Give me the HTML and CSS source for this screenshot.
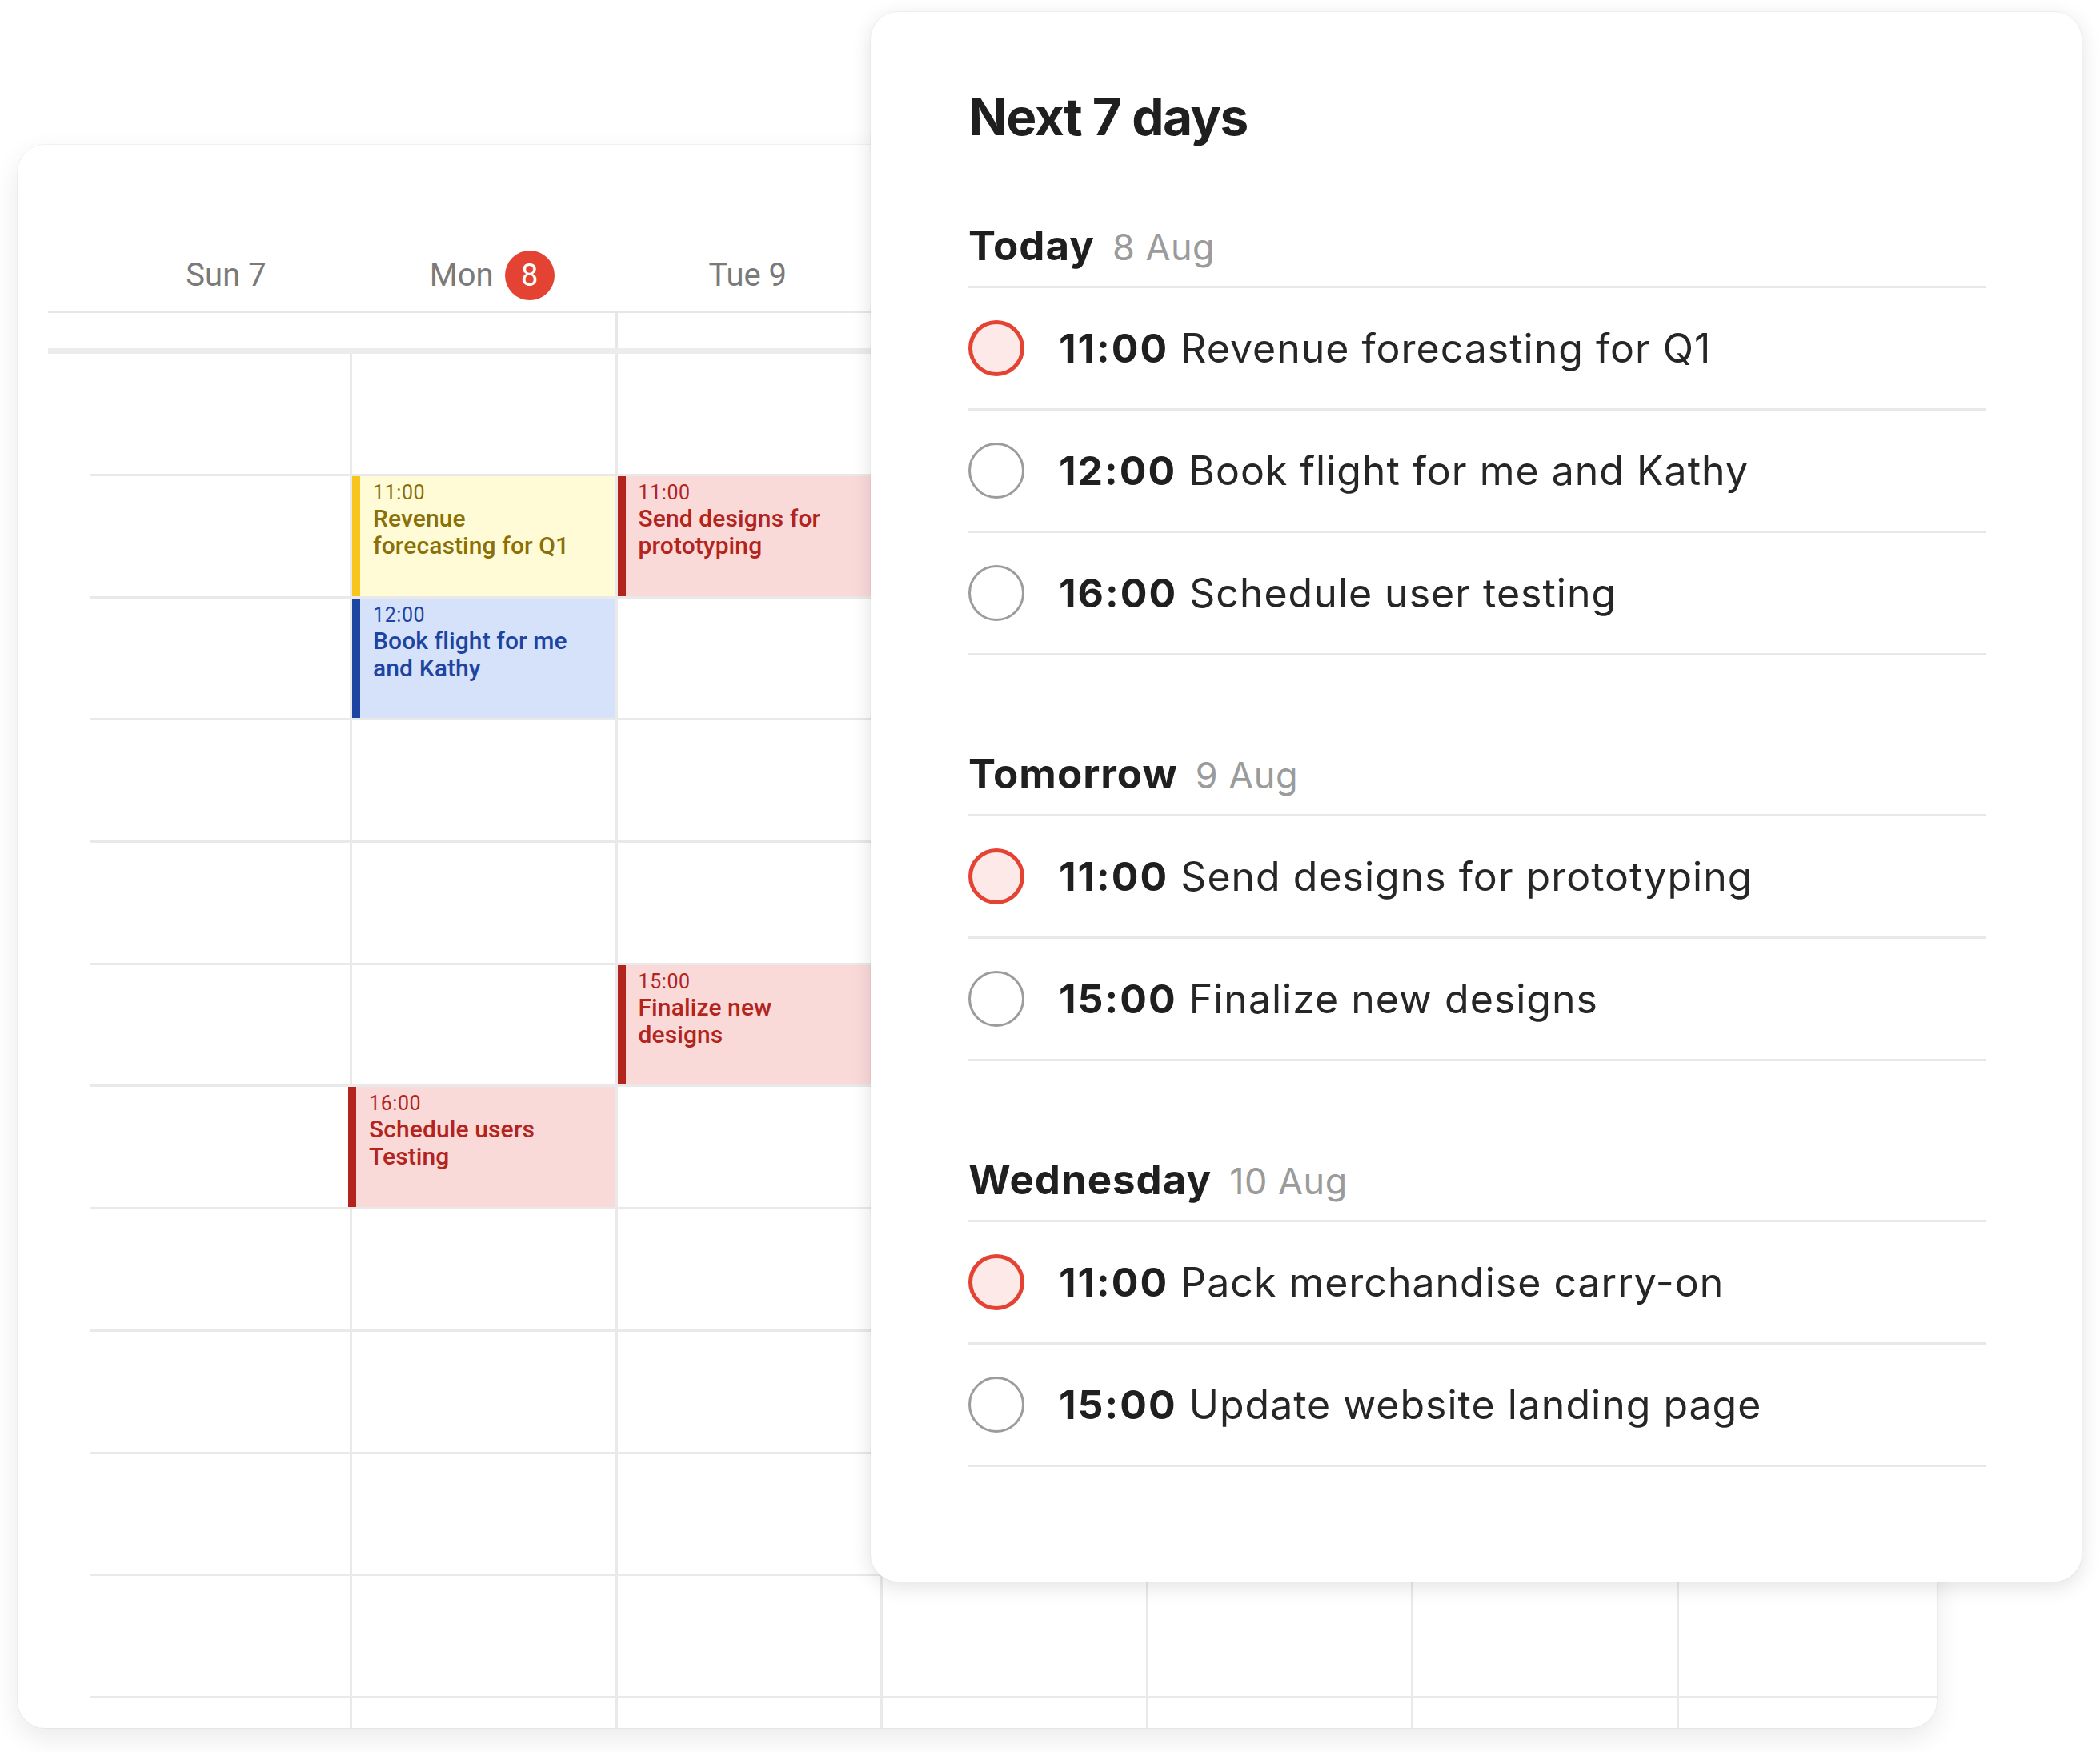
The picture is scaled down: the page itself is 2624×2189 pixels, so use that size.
FILE: index.html
```html
<!DOCTYPE html>
<html lang="en">
<head>
<meta charset="utf-8">
<title>Next 7 days</title>
<link rel="stylesheet" href="styles.css">
</head>
<body>
<div class="stage">
  <section class="calendar">
    <div class="cal-head">
      <div class="day-labels">
        <div class="day sun">Sun 7</div>
        <div class="day mon">Mon <span class="badge">8</span></div>
        <div class="day">Tue 9</div>
        <div class="day"></div>
        <div class="day"></div>
        <div class="day"></div>
        <div class="day"></div>
      </div>
    </div>
    <div class="allday">
      <div class="allday-grid">
        <div class="ad-cell"></div><div class="ad-cell"></div><div class="ad-cell"></div><div class="ad-cell"></div><div class="ad-cell"></div><div class="ad-cell"></div><div class="ad-cell"></div>
      </div>
    </div>
    <div class="cal-body">
      <div class="hour-row first">
        <div class="cell"></div><div class="cell"></div><div class="cell"></div><div class="cell"></div><div class="cell"></div><div class="cell"></div><div class="cell"></div>
      </div>
      <div class="hour-row">
        <div class="cell"></div>
        <div class="cell"><div class="event yellow"><div class="ev-time">11:00</div><div class="ev-title">Revenue forecasting for Q1</div></div></div>
        <div class="cell"><div class="event red"><div class="ev-time">11:00</div><div class="ev-title">Send designs for prototyping</div></div></div>
        <div class="cell"></div><div class="cell"></div><div class="cell"></div><div class="cell"></div>
      </div>
      <div class="hour-row">
        <div class="cell"></div>
        <div class="cell"><div class="event blue"><div class="ev-time">12:00</div><div class="ev-title">Book flight for me and Kathy</div></div></div>
        <div class="cell"></div><div class="cell"></div><div class="cell"></div><div class="cell"></div><div class="cell"></div>
      </div>
      <div class="hour-row">
        <div class="cell"></div><div class="cell"></div><div class="cell"></div><div class="cell"></div><div class="cell"></div><div class="cell"></div><div class="cell"></div>
      </div>
      <div class="hour-row">
        <div class="cell"></div><div class="cell"></div><div class="cell"></div><div class="cell"></div><div class="cell"></div><div class="cell"></div><div class="cell"></div>
      </div>
      <div class="hour-row">
        <div class="cell"></div><div class="cell"></div>
        <div class="cell"><div class="event red"><div class="ev-time">15:00</div><div class="ev-title">Finalize new designs</div></div></div>
        <div class="cell"></div><div class="cell"></div><div class="cell"></div><div class="cell"></div>
      </div>
      <div class="hour-row">
        <div class="cell"></div>
        <div class="cell"><div class="event red wide"><div class="ev-time">16:00</div><div class="ev-title">Schedule users Testing</div></div></div>
        <div class="cell"></div><div class="cell"></div><div class="cell"></div><div class="cell"></div><div class="cell"></div>
      </div>
      <div class="hour-row">
        <div class="cell"></div><div class="cell"></div><div class="cell"></div><div class="cell"></div><div class="cell"></div><div class="cell"></div><div class="cell"></div>
      </div>
      <div class="hour-row">
        <div class="cell"></div><div class="cell"></div><div class="cell"></div><div class="cell"></div><div class="cell"></div><div class="cell"></div><div class="cell"></div>
      </div>
      <div class="hour-row">
        <div class="cell"></div><div class="cell"></div><div class="cell"></div><div class="cell"></div><div class="cell"></div><div class="cell"></div><div class="cell"></div>
      </div>
      <div class="hour-row">
        <div class="cell"></div><div class="cell"></div><div class="cell"></div><div class="cell"></div><div class="cell"></div><div class="cell"></div><div class="cell"></div>
      </div>
      <div class="hour-row last">
        <div class="cell"></div><div class="cell"></div><div class="cell"></div><div class="cell"></div><div class="cell"></div><div class="cell"></div><div class="cell"></div>
      </div>
    </div>
  </section>

  <aside class="panel">
    <h1 class="panel-title">Next 7 days</h1>

    <section class="group">
      <h2 class="group-head"><span class="group-name">Today</span><span class="group-date">8 Aug</span></h2>
      <ul class="tasks">
        <li class="task"><span class="check urgent"></span><span class="task-text"><b>11:00</b> Revenue forecasting for Q1</span></li>
        <li class="task"><span class="check"></span><span class="task-text"><b>12:00</b> Book flight for me and Kathy</span></li>
        <li class="task"><span class="check"></span><span class="task-text"><b>16:00</b> Schedule user testing</span></li>
      </ul>
    </section>

    <section class="group">
      <h2 class="group-head"><span class="group-name">Tomorrow</span><span class="group-date">9 Aug</span></h2>
      <ul class="tasks">
        <li class="task"><span class="check urgent"></span><span class="task-text"><b>11:00</b> Send designs for prototyping</span></li>
        <li class="task"><span class="check"></span><span class="task-text"><b>15:00</b> Finalize new designs</span></li>
      </ul>
    </section>

    <section class="group">
      <h2 class="group-head"><span class="group-name">Wednesday</span><span class="group-date">10 Aug</span></h2>
      <ul class="tasks">
        <li class="task"><span class="check urgent"></span><span class="task-text"><b>11:00</b> Pack merchandise carry-on</span></li>
        <li class="task"><span class="check"></span><span class="task-text"><b>15:00</b> Update website landing page</span></li>
      </ul>
    </section>
  </aside>
</div>
</body>
</html>
```

FILE: styles.css
```css
* {
  box-sizing: border-box;
  margin: 0;
  padding: 0;
}

html, body {
  background: #ffffff;
}

body {
  width: 2624px;
  height: 2189px;
  overflow: hidden;
  font-family: Roboto, "Liberation Sans", sans-serif;
}

.stage {
  position: relative;
  width: 2624px;
  height: 2189px;
  padding: 181px 0 0 22px;
}

/* ---------- Calendar card ---------- */
.calendar {
  width: 2398px;
  height: 1978px;
  background: #ffffff;
  border-radius: 34px;
  overflow: hidden;
  box-shadow: 0 0 0 1px rgba(0, 0, 0, 0.035), 0 12px 34px rgba(0, 0, 0, 0.09);
}

.cal-head {
  margin-left: 38px;
  padding: 131px 0 13px 52px;
  border-bottom: 3px solid #e7e7e7;
}

.day-labels,
.allday-grid,
.hour-row {
  display: grid;
  grid-template-columns: 325px repeat(6, 331.5px);
}

.day {
  display: flex;
  align-items: center;
  justify-content: center;
  gap: 14px;
  height: 63px;
  font-size: 40px;
  line-height: 63px;
  color: #7a7a7a;
  white-space: nowrap;
}

.day.sun {
  padding-left: 16px;
}

.day.mon {
  padding-left: 24px;
}

.badge {
  display: inline-flex;
  align-items: center;
  justify-content: center;
  width: 62px;
  height: 62px;
  border-radius: 50%;
  background: #e44232;
  color: #ffffff;
  font-size: 38px;
  line-height: 1;
}

.allday {
  margin-left: 38px;
  padding-left: 52px;
  border-bottom: 7px solid #ececec;
}

.allday-grid {
  height: 44px;
}

.ad-cell:nth-child(n+3) {
  border-left: 3px solid #e7e7e7;
}

.cal-body {
  margin-left: 90px;
}

.hour-row {
  height: 152.7px;
  border-top: 3px solid #e9e9e9;
}

.hour-row.first {
  height: 150px;
  border-top: 0;
}

.hour-row.last {
  height: 60px;
}

.cell + .cell {
  border-left: 3px solid #e9e9e9;
}

/* ---------- Events ---------- */
.event {
  height: 100%;
  border-left: 10px solid;
  padding: 6px 30px 0 16px;
}

.event.wide {
  margin-left: -5px;
}

.ev-time {
  font-size: 25px;
  line-height: 30px;
  font-weight: 400;
  letter-spacing: 0.6px;
}

.ev-title {
  font-size: 30px;
  line-height: 34px;
  font-weight: 500;
  letter-spacing: 0.1px;
}

.event.yellow {
  background: #fefbd6;
  border-left-color: #f7c51b;
  color: #8b6f07;
}

.event.red {
  background: #fad9d9;
  border-left-color: #b2241c;
  color: #b2241c;
}

.event.blue {
  background: #d6e2fa;
  border-left-color: #1e44a1;
  color: #1e44a1;
}

/* ---------- Next 7 days panel ---------- */
.panel {
  position: absolute;
  left: 1088px;
  top: 15px;
  width: 1513px;
  height: 1961px;
  background: #ffffff;
  border-radius: 34px;
  padding: 93px 119px 0 122px;
  box-shadow: 0 0 0 1px rgba(0, 0, 0, 0.03), 0 6px 26px rgba(0, 0, 0, 0.12);
  font-family: Inter, "Noto Sans", sans-serif;
  color: #222222;
}

.panel-title {
  font-size: 64px;
  line-height: 76px;
  font-weight: 700;
  letter-spacing: -1.5px;
  color: #1f1f1f;
}

.group {
  margin-top: 118px;
}

.panel-title + .group {
  margin-top: 93px;
}

.group-head {
  display: flex;
  align-items: baseline;
  gap: 22px;
  height: 83px;
  padding-bottom: 20px;
  border-bottom: 3px solid #e8e8e8;
  line-height: 60px;
}

.group-name {
  font-size: 51px;
  font-weight: 700;
  letter-spacing: 1px;
  color: #1f1f1f;
}

.group-date {
  font-size: 45px;
  font-weight: 400;
  letter-spacing: 0.5px;
  color: #9b9b9b;
}

.tasks {
  list-style: none;
}

.task {
  display: flex;
  align-items: center;
  gap: 43px;
  height: 153px;
  border-bottom: 3px solid #e8e8e8;
}

.check {
  flex: none;
  width: 70px;
  height: 70px;
  border-radius: 50%;
  border: 3px solid #9c9c9c;
  background: #ffffff;
}

.check.urgent {
  border: 5px solid #e44232;
  background: #fde9e7;
}

.task-text {
  font-size: 50px;
  line-height: 60px;
  font-weight: 400;
  color: #262626;
  letter-spacing: 1px;
  white-space: nowrap;
}

.task-text b {
  font-weight: 700;
  letter-spacing: 2px;
  color: #1f1f1f;
}
```
